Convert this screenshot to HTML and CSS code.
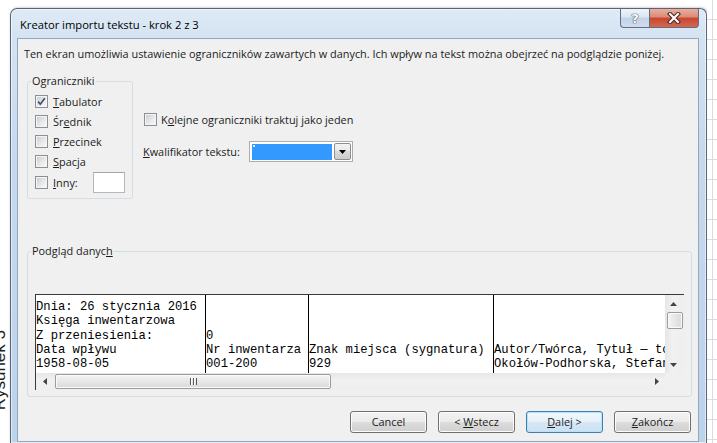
FILE: index.html
```html
<!DOCTYPE html>
<html lang="pl">
<head>
<meta charset="utf-8">
<title>Kreator importu tekstu - krok 2 z 3</title>
<link rel="stylesheet" href="styles.css">
</head>
<body>
<div class="desk">
  <div class="page-margin"><span class="figure-caption">Rysunek 3</span></div>

  <div class="window">
    <div class="titlebar">
      <span class="title">Kreator importu tekstu - krok 2 z 3</span>
      <div class="caption-buttons">
        <span class="cap-btn help">?</span>
        <span class="cap-btn close">
          <svg width="14" height="12" viewBox="0 0 14 12">
            <path d="M3 2 L11 10 M11 2 L3 10" stroke="#4a2b26" stroke-width="4.2" stroke-linecap="square"/>
            <path d="M3 2 L11 10 M11 2 L3 10" stroke="#fff" stroke-width="2" stroke-linecap="square"/>
          </svg>
        </span>
      </div>
    </div>

    <div class="client">
      <p class="intro">Ten ekran umożliwia ustawienie ograniczników zawartych w danych. Ich wpływ na tekst można obejrzeć na podglądzie poniżej.</p>

      <div class="options">
        <fieldset class="group delimiters">
          <legend>Ograniczniki</legend>
          <div class="check">
            <span class="box">
              <svg width="11" height="11" viewBox="0 0 11 11"><path d="M2.2 5.6 L4.3 8.2 L8.8 2.2" fill="none" stroke="#3f4f74" stroke-width="1.7"/></svg>
            </span>
            <span><u>T</u>abulator</span>
          </div>
          <div class="check"><span class="box"></span><span>Śr<u>e</u>dnik</span></div>
          <div class="check"><span class="box"></span><span><u>P</u>rzecinek</span></div>
          <div class="check"><span class="box"></span><span><u>S</u>pacja</span></div>
          <div class="check other"><span class="box"></span><span><u>I</u>nny:</span><span class="textbox"></span></div>
        </fieldset>

        <div class="side">
          <div class="check"><span class="box"></span><span>K<u>o</u>lejne ograniczniki traktuj jako jeden</span></div>
          <div class="qualifier">
            <span class="qualifier-label"><u>K</u>walifikator tekstu:</span>
            <div class="combo">
              <span class="combo-value"></span>
              <span class="combo-button">
                <svg width="7" height="4" viewBox="0 0 7 4"><path d="M0 0 H7 L3.5 4 Z" fill="#000"/></svg>
              </span>
            </div>
          </div>
        </div>
      </div>

      <fieldset class="group preview">
        <legend>Podgląd danyc<u>h</u></legend>
        <div class="grid-view">
          <div class="data">
            <div class="col c1">
              <span>Dnia: 26 stycznia 2016</span>
              <span>Księga inwentarzowa</span>
              <span>Z przeniesienia:</span>
              <span>Data wpływu</span>
              <span>1958-08-05</span>
            </div>
            <div class="col c2">
              <span></span>
              <span></span>
              <span>0</span>
              <span>Nr inwentarza</span>
              <span>001-200</span>
            </div>
            <div class="col c3">
              <span></span>
              <span></span>
              <span></span>
              <span>Znak miejsca (sygnatura)</span>
              <span>929</span>
            </div>
            <div class="col c4">
              <span></span>
              <span></span>
              <span></span>
              <span>Autor/Twórca, Tytuł — tom, część</span>
              <span>Okołów-Podhorska, Stefania</span>
            </div>
          </div>

          <div class="vscroll">
            <span class="sb-btn">
              <svg width="7" height="4" viewBox="0 0 7 4"><path d="M0 4 H7 L3.5 0 Z" fill="#444"/></svg>
            </span>
            <span class="vthumb"></span>
            <span class="sb-btn end">
              <svg width="7" height="4" viewBox="0 0 7 4"><path d="M0 0 H7 L3.5 4 Z" fill="#444"/></svg>
            </span>
          </div>

          <div class="hscroll">
            <span class="sb-btn">
              <svg width="4" height="7" viewBox="0 0 4 7"><path d="M4 0 V7 L0 3.5 Z" fill="#444"/></svg>
            </span>
            <span class="hthumb"><span class="grip"></span></span>
            <span class="sb-btn end">
              <svg width="4" height="7" viewBox="0 0 4 7"><path d="M0 0 V7 L4 3.5 Z" fill="#444"/></svg>
            </span>
          </div>
          <div class="corner"></div>
        </div>
      </fieldset>

      <div class="buttons">
        <button type="button" class="btn">Cancel</button>
        <button type="button" class="btn">&lt; <u>W</u>stecz</button>
        <button type="button" class="btn default"><u>D</u>alej &gt;</button>
        <button type="button" class="btn"><u>Z</u>akończ</button>
      </div>
    </div>
  </div>

  <div class="sheet"></div>
</div>
</body>
</html>
```

FILE: styles.css
```css
* { box-sizing: border-box; }

html, body { margin: 0; padding: 0; }

body {
  width: 717px;
  height: 443px;
  overflow: hidden;
  background: #fff;
  font-family: "Open Sans", "Noto Sans", "Liberation Sans", sans-serif;
  font-size: 10.9px;
  color: #1b1b1b;
}

u {
  text-decoration-thickness: 1px;
  text-underline-offset: 1px;
}

.desk {
  display: flex;
  height: 443px;
}

/* strip of the document page left of the dialog */
.page-margin {
  width: 10px;
  flex: none;
  overflow: hidden;
  display: flex;
  flex-direction: column;
  padding-top: 330px;
}

.figure-caption {
  writing-mode: vertical-rl;
  transform: rotate(180deg);
  font-family: "Liberation Sans", sans-serif;
  font-size: 17px;
  line-height: 18px;
  color: #222;
  margin-left: -9px;
  white-space: nowrap;
}

/* spreadsheet cells behind the dialog */
.sheet {
  flex: 1;
  background-image:
    linear-gradient(90deg, transparent 0 5px, #d9dcdf 5px 6px, transparent 6px),
    repeating-linear-gradient(180deg, #fff 0 19px, #d9dcdf 19px 20px);
}

/* dialog frame */
.window {
  width: 697px;
  flex: none;
  margin-top: 8px;
  border: 1px solid #56657a;
  border-bottom: 0;
  border-radius: 7px 7px 0 0;
  background: linear-gradient(180deg, #dfeaf6 0, #d4e3f2 30px, #c6d9ee 140px, #bcd3ec 100%);
  box-shadow: inset 0 0 0 1px rgba(255, 255, 255, .55), 1px 0 3px rgba(0, 0, 0, .35);
  padding: 0 7px 0 6px;
  display: flex;
  flex-direction: column;
}

.titlebar {
  height: 29px;
  flex: none;
  display: flex;
  align-items: flex-start;
}

.title {
  padding: 8px 0 0 3px;
  line-height: 15px;
  font-size: 11.2px;
  color: #000;
}

.caption-buttons {
  margin-left: auto;
  display: flex;
}

.cap-btn {
  height: 19px;
  display: flex;
  align-items: center;
  justify-content: center;
  border: 1px solid #5f6f86;
  border-top: 0;
}

.help {
  width: 29px;
  border-right: 0;
  border-radius: 0 0 0 4px;
  background: linear-gradient(180deg, #edf3f9 0, #dbe6f2 45%, #c3d3e6 50%, #cddcee 100%);
  color: #fff;
  font-family: "DejaVu Sans", sans-serif;
  font-size: 13px;
  font-weight: bold;
  line-height: 1;
  text-shadow: 0 0 1px #3d4a5c, 0 0 1px #3d4a5c, 0 0 1px #3d4a5c;
}

.close {
  width: 50px;
  border-radius: 0 0 4px 0;
  background: linear-gradient(180deg, #eaae9f 0, #dc8a77 45%, #c8452f 50%, #d5684f 100%);
}

/* client area */
.client {
  flex: none;
  height: 404px;
  border: 1px solid #95a7be;
  background: #f0f0f0;
  display: flex;
  flex-direction: column;
}

.intro {
  margin: 0;
  padding: 7px 0 0 6px;
  line-height: 15px;
  white-space: nowrap;
}

.options {
  display: flex;
  align-items: flex-start;
  margin: 13px 0 0 9px;
}

.group {
  margin: 0;
  padding: 3px 7px 4px;
  border: 1px solid #d3dde4;
  border-radius: 3px;
  min-inline-size: 0;
}

.group legend {
  padding: 0 1px;
  margin-left: -4px;
  line-height: 14px;
}

.delimiters { width: 106px; }

.check {
  display: flex;
  align-items: center;
  gap: 5px;
  height: 20px;
  white-space: nowrap;
}

.box {
  width: 13px;
  height: 13px;
  flex: none;
  border: 1px solid #8e8f8f;
  background: linear-gradient(135deg, #c6cbd1 0, #e6e8eb 55%, #fbfbfb 100%);
  box-shadow: inset 0 0 0 1px #f4f4f4;
  display: flex;
  align-items: center;
  justify-content: center;
}

.other { height: 23px; }

.textbox {
  margin-left: auto;
  width: 32px;
  height: 21px;
  background: #fff;
  border: 1px solid #b4b7bd;
  border-top-color: #a3a6ac;
}

.side {
  margin: 35px 0 0 10px;
  display: flex;
  flex-direction: column;
}

.side .check { gap: 4px; }
.side .check .box { margin-left: 1px; }

.qualifier {
  display: flex;
  align-items: center;
  height: 21px;
  margin-top: 12px;
}

.qualifier-label { width: 106px; }

.combo {
  width: 104px;
  height: 21px;
  border: 1px solid #abadb3;
  background: #fff;
  padding: 1px;
  display: flex;
}

.combo-value {
  width: 80px;
  margin: 1px 0 0 1px;
  background-color: #3399ff;
  background-image: linear-gradient(90deg, #dcecff 0 2px, transparent 2px);
  background-size: 100% 2px;
  background-position: 1px 1px;
  background-repeat: no-repeat;
}

.combo-button {
  margin-left: auto;
  width: 17px;
  border: 1px solid #8f8f8f;
  border-radius: 2px;
  background: linear-gradient(180deg, #f3f3f3 0, #e9e9e9 50%, #dadada 50%, #cdcdcd 100%);
  display: flex;
  align-items: center;
  justify-content: center;
}

/* data preview */
.preview {
  width: 665px;
  margin: 45px 0 0 9px;
  padding: 36px 7px 6px;
}

.grid-view {
  display: grid;
  grid-template-columns: 629px 19px;
  grid-template-rows: 78px 17px;
  border-top: 1px solid #3a3a3a;
  border-left: 1px solid #3a3a3a;
  background: #fff;
}

.data {
  display: flex;
  overflow: hidden;
  font-family: "Liberation Mono", "Courier New", monospace;
  font-size: 12.2px;
  line-height: 14.3px;
  color: #000;
}

.col {
  flex: none;
  padding-top: 5px;
  border-right: 1px solid #000;
  overflow: hidden;
}

.col span {
  display: block;
  height: 14.3px;
  white-space: pre;
}

.c1 { width: 170px; }
.c2 { width: 103px; }
.c3 { width: 185px; }
.c4 { width: 260px; border-right: 0; }

.vscroll {
  display: flex;
  flex-direction: column;
  background: linear-gradient(90deg, #e6e6e6, #f1f1f1 40%, #eeeeee);
}

.hscroll {
  display: flex;
  background: linear-gradient(180deg, #e6e6e6, #f1f1f1 40%, #eeeeee);
}

.sb-btn {
  flex: none;
  width: 17px;
  height: 17px;
  display: flex;
  align-items: center;
  justify-content: center;
}

.sb-btn.end { margin-top: auto; }
.hscroll .sb-btn.end { margin-top: 0; margin-left: auto; }

.vthumb {
  height: 17px;
  margin: 0 1px 0 2px;
  border: 1px solid #9b9b9b;
  border-radius: 2px;
  background: linear-gradient(90deg, #f4f4f4, #e7e7e7 50%, #d9d9d9);
  box-shadow: inset 0 0 0 1px #fbfbfb;
}

.hthumb {
  width: 276px;
  margin: 1px 0 1px 2px;
  border: 1px solid #9b9b9b;
  border-radius: 2px;
  background: linear-gradient(180deg, #f4f4f4, #e7e7e7 50%, #d9d9d9);
  box-shadow: inset 0 0 0 1px #fbfbfb;
  display: flex;
  align-items: center;
  justify-content: center;
}

.grip {
  width: 7px;
  height: 7px;
  background: repeating-linear-gradient(90deg, #555 0 1px, #fff 1px 2px, transparent 2px 3px);
}

.corner { background: #f0f0f0; }

/* dialog buttons */
.buttons {
  display: flex;
  justify-content: flex-end;
  gap: 11px;
  margin-top: 14px;
  padding-right: 7px;
}

.btn {
  width: 77px;
  height: 22px;
  padding: 0;
  border: 1px solid #707070;
  border-radius: 3px;
  background: linear-gradient(180deg, #f2f2f2 0, #ebebeb 50%, #dddddd 50%, #cfcfcf 100%);
  box-shadow: inset 0 0 0 1px #fcfcfc;
  font: inherit;
  line-height: 20px;
  color: #1b1b1b;
  text-align: center;
  white-space: nowrap;
}

.btn.default {
  border-color: #3c7fb1;
  background: linear-gradient(180deg, #f1f7fc 0, #e6f0f9 50%, #d7e7f5 50%, #cde1f2 100%);
  box-shadow: inset 0 0 0 1px #b7e3f9;
}
```
